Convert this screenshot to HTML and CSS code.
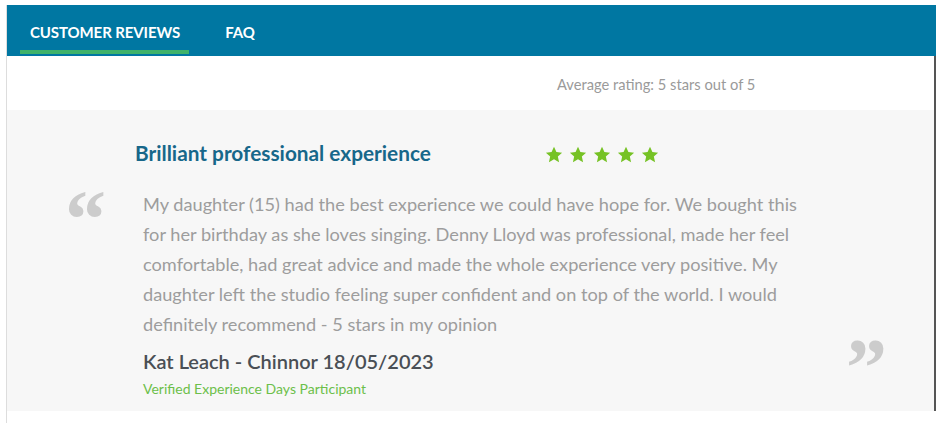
FILE: index.html
```html
<!DOCTYPE html>
<html lang="en">
<head>
<meta charset="UTF-8">
<title>Customer Reviews</title>
<link rel="stylesheet" href="styles.css">
</head>
<body>
<div class="reviews-box">
    <ul class="tabs">
        <li class="tab active">CUSTOMER REVIEWS</li>
        <li class="tab">FAQ</li>
    </ul>

    <div class="summary">Average rating: 5 stars out of 5</div>

    <div class="review">
        <div class="review-head">
            <h3 class="review-title">Brilliant professional experience</h3>
            <div class="stars">
                <svg viewBox="0 0 24 24"><path d="M12 2.2l2.9 6.3 6.8.7-5.1 4.6 1.5 6.8L12 17.1l-6.1 3.5 1.5-6.8-5.1-4.6 6.8-.7z"/></svg>
                <svg viewBox="0 0 24 24"><path d="M12 2.2l2.9 6.3 6.8.7-5.1 4.6 1.5 6.8L12 17.1l-6.1 3.5 1.5-6.8-5.1-4.6 6.8-.7z"/></svg>
                <svg viewBox="0 0 24 24"><path d="M12 2.2l2.9 6.3 6.8.7-5.1 4.6 1.5 6.8L12 17.1l-6.1 3.5 1.5-6.8-5.1-4.6 6.8-.7z"/></svg>
                <svg viewBox="0 0 24 24"><path d="M12 2.2l2.9 6.3 6.8.7-5.1 4.6 1.5 6.8L12 17.1l-6.1 3.5 1.5-6.8-5.1-4.6 6.8-.7z"/></svg>
                <svg viewBox="0 0 24 24"><path d="M12 2.2l2.9 6.3 6.8.7-5.1 4.6 1.5 6.8L12 17.1l-6.1 3.5 1.5-6.8-5.1-4.6 6.8-.7z"/></svg>
            </div>
        </div>
        <div class="review-body">
            <span class="quote open">&ldquo;</span>
            <div class="review-main">
                <p class="review-text">My daughter (15) had the best experience we could have hope for. We bought this for her birthday as she loves singing. Denny Lloyd was professional, made her feel comfortable, had great advice and made the whole experience very positive. My daughter left the studio feeling super confident and on top of the world. I would definitely recommend - 5 stars in my opinion</p>
                <div class="reviewer">Kat Leach - Chinnor 18/05/2023</div>
                <div class="verified">Verified Experience Days Participant</div>
            </div>
            <span class="quote close">&rdquo;</span>
        </div>
    </div>
</div>
</body>
</html>
```

FILE: styles.css
```css
body {
    margin: 0;
    font-family: Lato, "Open Sans", sans-serif;
    background: #fff;
}

.reviews-box {
    margin-top: 5px;
    margin-left: 6px;
    width: 930px;
    height: 418px;
    border-left: 1px solid #ddd;
    box-sizing: border-box;
    background: #fff;
}

.tabs {
    list-style: none;
    margin: 0;
    padding: 0 0 0 13px;
    height: 51px;
    background: #0077a2;
    display: flex;
    gap: 4px;
}

.tab {
    color: #fff;
    font-weight: bold;
    font-size: 15px;
    padding: 0 9px 0 10px;
    height: 51px;
    line-height: 54px;
    box-sizing: border-box;
    position: relative;
    letter-spacing: -0.1px;
}

.tab + .tab {
    padding-left: 32px;
}

.tab.active::after {
    content: "";
    position: absolute;
    left: 0;
    right: 0;
    bottom: 2px;
    height: 4px;
    background: #3fb26a;
}

.summary {
    height: 54px;
    padding-left: 550px;
    line-height: 57px;
    font-size: 14.7px;
    color: #9a9a9a;
    border-right: 2px solid #555;
}

.review {
    background: #f7f7f7;
    height: 301px;
    padding-top: 30px;
    box-sizing: border-box;
    border-right: 2px solid #555;
}

.review-head {
    display: flex;
    align-items: center;
    padding-left: 128px;
}

.review-title {
    margin: 0;
    width: 409px;
    font-size: 20.8px;
    color: #17678a;
    font-weight: bold;
}

.stars {
    display: flex;
    gap: 4px;
    margin-top: 4px;
}

.stars svg {
    width: 20px;
    height: 20px;
    fill: #76c225;
}

.review-body {
    display: flex;
    padding-top: 24px;
}

.quote {
    font-family: "Liberation Serif", "Times New Roman", serif;
    font-size: 82px;
    font-weight: bold;
    color: #cccccc;
    line-height: 1;
    height: 40px;
}

.quote.open {
    margin-left: 58px;
    width: 78px;
    margin-top: -10px;
}

.quote.close {
    margin-left: 43px;
    padding-top: 138px;
}

.review-main {
    width: 660px;
}

.review-text {
    margin: 0;
    font-size: 18.2px;
    line-height: 30px;
    color: #9d9d9d;
}

.reviewer {
    margin-top: 10px;
    font-size: 20px;
    font-weight: 600;
    color: #4a4f55;
}

.verified {
    margin-top: 7px;
    font-size: 14px;
    color: #6cbf4a;
}
```
